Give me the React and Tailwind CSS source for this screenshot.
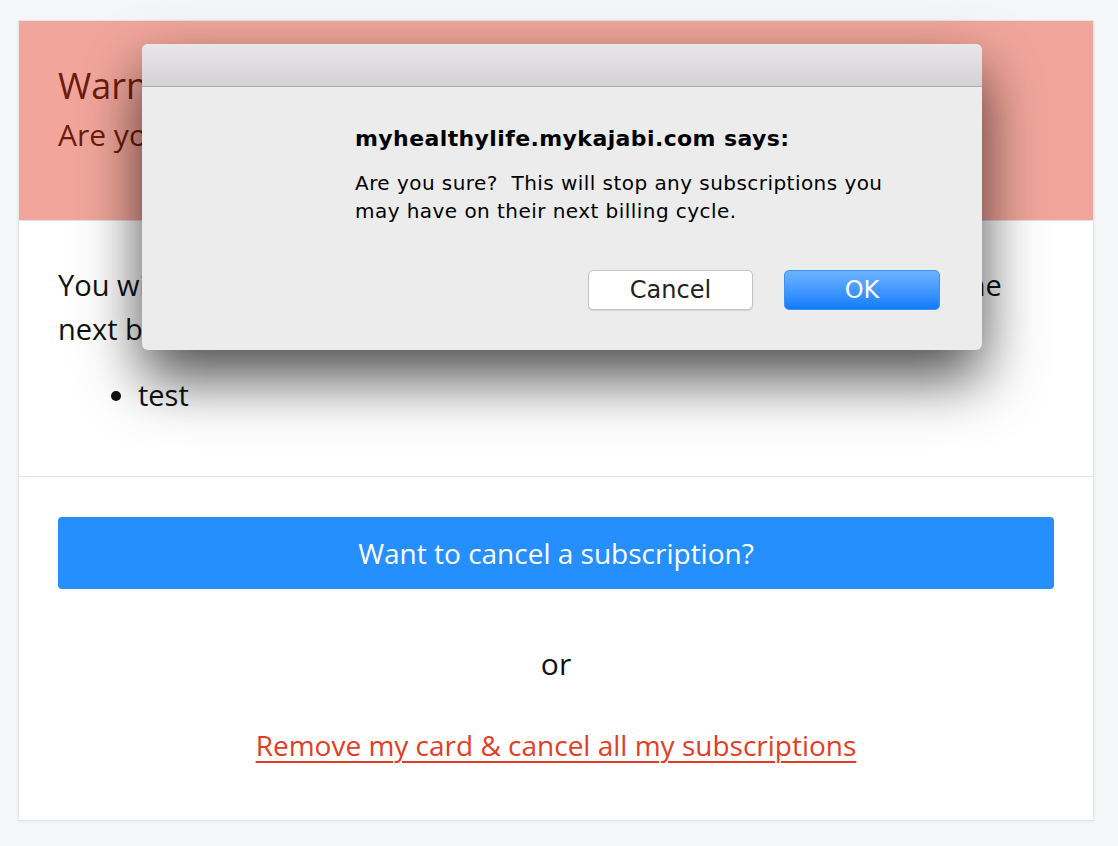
import React from 'react';

const sans = { fontFamily: '"Open Sans", "Liberation Sans", sans-serif' };
const mac = { fontFamily: '"DejaVu Sans", "Liberation Sans", sans-serif' };

// Browser confirm() sheet drawn over the page
const ConfirmDialog = () => (
  <div className="absolute left-[142px] top-[44px] w-[840px] h-[306px] rounded-[6px] bg-[#ececec] shadow-[0_28px_60px_rgba(0,0,0,0.7)] overflow-hidden" style={mac}>
    <div className="h-[43px] bg-gradient-to-b from-[#e9e7e9] to-[#d4d2d4] border-b border-[#aeacae]" />
    <div className="pl-[213px] pr-[42px] pt-[38px]">
      <h2 className="text-[22px] font-bold tracking-[0.4px] text-black leading-[28px]">myhealthylife.mykajabi.com says:</h2>
      <p className="mt-[16px] text-[20px] leading-[28px] tracking-[0.45px] text-black whitespace-pre-line">
        {'Are you sure?\u00a0 This will stop any subscriptions you\nmay have on their next billing cycle.'}
      </p>
      <div className="mt-[45px] flex justify-end gap-[31px]">
        <button className="w-[165px] h-[40px] rounded-[5px] bg-white border border-[#c4c4c4] shadow-[0_1px_1px_rgba(0,0,0,0.1)] text-[24px] text-[#222]">
          Cancel
        </button>
        <button className="w-[156px] h-[40px] rounded-[5px] bg-gradient-to-b from-[#6cb3fd] to-[#0a7bff] border border-[#3f8ff5] text-[24px] text-white">
          OK
        </button>
      </div>
    </div>
  </div>
);

export default function App() {
  return (
    <div className="min-h-[846px] bg-[#f5f6f8] pt-[20px] pl-[18px] pr-[24px] pb-[24px] relative" style={sans}>
      <div className="bg-white border border-[#e1e4e8] shadow-[0_1px_3px_rgba(0,0,0,0.06)]">
        {/* Warning banner */}
        <div className="h-[200px] bg-[#f2a69b] px-[39px] pt-[41px] text-[#6e1b0c] border-b border-[#dfe2e7]">
          <div className="text-[36px] leading-[48px]">Warning!</div>
          <div className="text-[30px] leading-[50px]">Are you sure you want to remove your card?</div>
        </div>

        {/* Subscriptions list */}
        <div className="px-[39px] pt-[42px] pb-[59px] border-b border-[#e1e4e8] text-[#111]">
          <p className="text-[29px] leading-[44px]">
            You will no longer be charged for these subscriptions starting with the
            <br />
            next billing cycle:
          </p>
          <ul className="list-disc pl-[80px] mt-[22px] text-[29px] leading-[44px]">
            <li>test</li>
          </ul>
        </div>

        {/* Actions */}
        <div className="px-[39px] pt-[40px] pb-[55px] flex flex-col items-center">
          <button className="w-full h-[72px] rounded-[4px] bg-[#258ffe] text-white text-[28px]">
            Want to cancel a subscription?
          </button>
          <div className="mt-[53px] text-[30px] leading-[44px] text-[#111]">or</div>
          <a href="#" className="mt-[39px] text-[28px] leading-[40px] text-[#e43d25] underline underline-offset-[5px] decoration-[2px]">
            Remove my card &amp; cancel all my subscriptions
          </a>
        </div>
      </div>

      <ConfirmDialog />
    </div>
  );
}
